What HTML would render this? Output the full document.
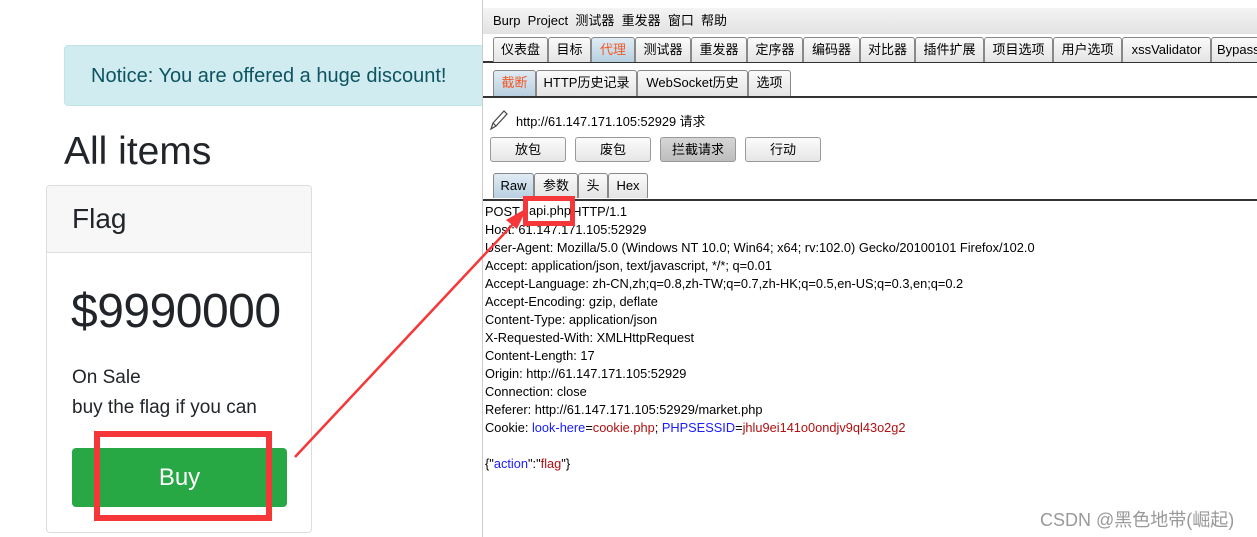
<!DOCTYPE html><html><head><meta charset="utf-8"><style>
body{margin:0;width:1257px;height:537px;position:relative;overflow:hidden;background:#fff;font-family:"Liberation Sans","Noto Sans CJK SC",sans-serif}
.a{position:absolute}
.alert{left:64px;top:45px;width:430px;height:61px;background:#d1ecf1;border:1px solid #bee5eb;border-radius:4px;box-sizing:border-box;color:#0c5460;font-size:20px;line-height:61px;padding-left:26px}
.card{left:46px;top:185px;width:266px;height:348px;border:1px solid #ddd;border-radius:4px;box-sizing:border-box;overflow:hidden}
.burp{left:482px;top:0;width:775px;height:537px;background:#fff;border-left:1px solid #ccc;font-size:12.5px;color:#000}
.tab{position:absolute;top:37px;height:25px;border:1px solid #888;border-bottom:none;border-radius:3px 3px 0 0;background:linear-gradient(#fafafa,#e4e4e4);box-sizing:border-box;text-align:center;line-height:24px;font-size:13px}
.btn{position:absolute;top:137px;height:25px;width:76px;border:1px solid #999;border-radius:3px;background:linear-gradient(#fbfbfb,#e6e6e6);box-sizing:border-box;text-align:center;line-height:23px;font-size:13px}
.ln{position:absolute;left:2px;font-size:12.8px;white-space:pre;line-height:18px}
</style></head><body>
<div class="alert a">Notice: You are offered a huge discount!</div>
<div class="a" style="left:64px;top:130px;font-size:39px;color:#212529">All items</div>
<div class="a card">
<div style="height:66px;background:#f7f7f7;border-bottom:1px solid #ddd;font-size:28px;line-height:66px;padding-left:25px;color:#212529">Flag</div>
<div style="position:absolute;left:24px;top:98px;font-size:48px;color:#212529;letter-spacing:-0.5px">$9990000</div>
<div style="position:absolute;left:25px;top:177px;font-size:19px;line-height:30px;color:#212529">On Sale<br>buy the flag if you can</div>
<div style="position:absolute;left:25px;top:262px;width:215px;height:59px;background:#28a745;border-radius:4px;color:#fff;font-size:24px;text-align:center;line-height:59px">Buy</div>
</div>
<div class="a" style="left:94px;top:431px;width:178px;height:90px;border:6px solid #f5373a;box-sizing:border-box"></div>
<div class="burp a">
<div class="a" style="left:0;top:8px;width:775px;height:26px;background:linear-gradient(#f4f4f4,#e2e2e2);font-size:13px;line-height:26px;padding-left:10px;box-sizing:border-box">Burp&nbsp; Project&nbsp; 测试器&nbsp; 重发器&nbsp; 窗口&nbsp; 帮助</div>
<div class="a" style="left:0;top:61px;width:775px;height:2px;background:#333"></div>
<div class="tab" style="left:10px;width:55px">仪表盘</div>
<div class="tab" style="left:65px;width:43px">目标</div>
<div class="tab" style="left:108px;width:44px;background:linear-gradient(#e0ecf5,#b8cfe0);color:#f05a28">代理</div>
<div class="tab" style="left:152px;width:56px">测试器</div>
<div class="tab" style="left:208px;width:56px">重发器</div>
<div class="tab" style="left:264px;width:56px">定序器</div>
<div class="tab" style="left:320px;width:57px">编码器</div>
<div class="tab" style="left:377px;width:55px">对比器</div>
<div class="tab" style="left:432px;width:69px">插件扩展</div>
<div class="tab" style="left:501px;width:69px">项目选项</div>
<div class="tab" style="left:570px;width:69px">用户选项</div>
<div class="tab" style="left:639px;width:89px">xssValidator</div>
<div class="tab" style="left:728px;width:60px;text-align:left;padding-left:5px">Bypass</div>
<div class="a" style="left:0;top:96px;width:775px;height:2px;background:#333"></div>
<div class="tab" style="top:70px;left:10px;width:43px;background:linear-gradient(#e0ecf5,#b8cfe0);color:#f05a28;height:26px">截断</div>
<div class="tab" style="top:70px;left:53px;width:101px;height:26px">HTTP历史记录</div>
<div class="tab" style="top:70px;left:154px;width:111px;height:26px">WebSocket历史</div>
<div class="tab" style="top:70px;left:265px;width:43px;height:26px">选项</div>
<svg class="a" style="left:6px;top:109px" width="20" height="22" viewBox="0 0 20 22"><path d="M2 20 L4 14 L15 2 L18 5 L7 17 Z M4 14 L7 17" fill="none" stroke="#444" stroke-width="1.2"/></svg>
<div class="a" style="left:33px;top:111px;font-size:12.8px">http://61.147.171.105:52929 请求</div>
<div class="btn" style="left:7px">放包</div>
<div class="btn" style="left:92px">废包</div>
<div class="btn" style="left:177px;background:linear-gradient(#d6d6d6,#bdbdbd)">拦截请求</div>
<div class="btn" style="left:262px">行动</div>
<div class="a" style="left:0;top:199px;width:775px;height:2px;background:#333"></div>
<div class="tab" style="top:173px;left:10px;width:41px;background:linear-gradient(#e0ecf5,#b8cfe0)">Raw</div>
<div class="tab" style="top:173px;left:51px;width:44px">参数</div>
<div class="tab" style="top:173px;left:95px;width:30px">头</div>
<div class="tab" style="top:173px;left:125px;width:40px">Hex</div>
<div class="ln" style="top:203px">POST /api.php HTTP/1.1</div>
<div class="ln" style="top:221px">Host: 61.147.171.105:52929</div>
<div class="ln" style="top:239px">User-Agent: Mozilla/5.0 (Windows NT 10.0; Win64; x64; rv:102.0) Gecko/20100101 Firefox/102.0</div>
<div class="ln" style="top:257px">Accept: application/json, text/javascript, */*; q=0.01</div>
<div class="ln" style="top:275px">Accept-Language: zh-CN,zh;q=0.8,zh-TW;q=0.7,zh-HK;q=0.5,en-US;q=0.3,en;q=0.2</div>
<div class="ln" style="top:293px">Accept-Encoding: gzip, deflate</div>
<div class="ln" style="top:311px">Content-Type: application/json</div>
<div class="ln" style="top:329px">X-Requested-With: XMLHttpRequest</div>
<div class="ln" style="top:347px">Content-Length: 17</div>
<div class="ln" style="top:365px">Origin: http://61.147.171.105:52929</div>
<div class="ln" style="top:383px">Connection: close</div>
<div class="ln" style="top:401px">Referer: http://61.147.171.105:52929/market.php</div>
<div class="ln" style="top:419px">Cookie: <span style="color:#1a1aff">look-here</span>=<span style="color:#b01010">cookie.php</span>; <span style="color:#1a1aff">PHPSESSID</span>=<span style="color:#b01010">jhlu9ei141o0ondjv9ql43o2g2</span></div>
<div class="ln" style="top:455px">{"<span style="color:#1a1aff">action</span>":"<span style="color:#b01010">flag</span>"}</div>
<div class="a" style="left:40px;top:196px;width:52px;height:30px;border:5px solid #f5373a;box-sizing:border-box;background:#fff;font-size:12.8px;line-height:20px;padding-left:1px">api.php</div>
<div class="a" style="left:557px;top:506px;font-size:18px;color:#999">CSDN @黑色地带(崛起)</div>
</div>
<svg class="a" style="left:0;top:0" width="1257" height="537"><line x1="295" y1="457" x2="515" y2="222" stroke="#f5373a" stroke-width="2.5"/><polygon points="527,208 506,220 517,229" fill="#f5373a"/></svg>
</body></html>
